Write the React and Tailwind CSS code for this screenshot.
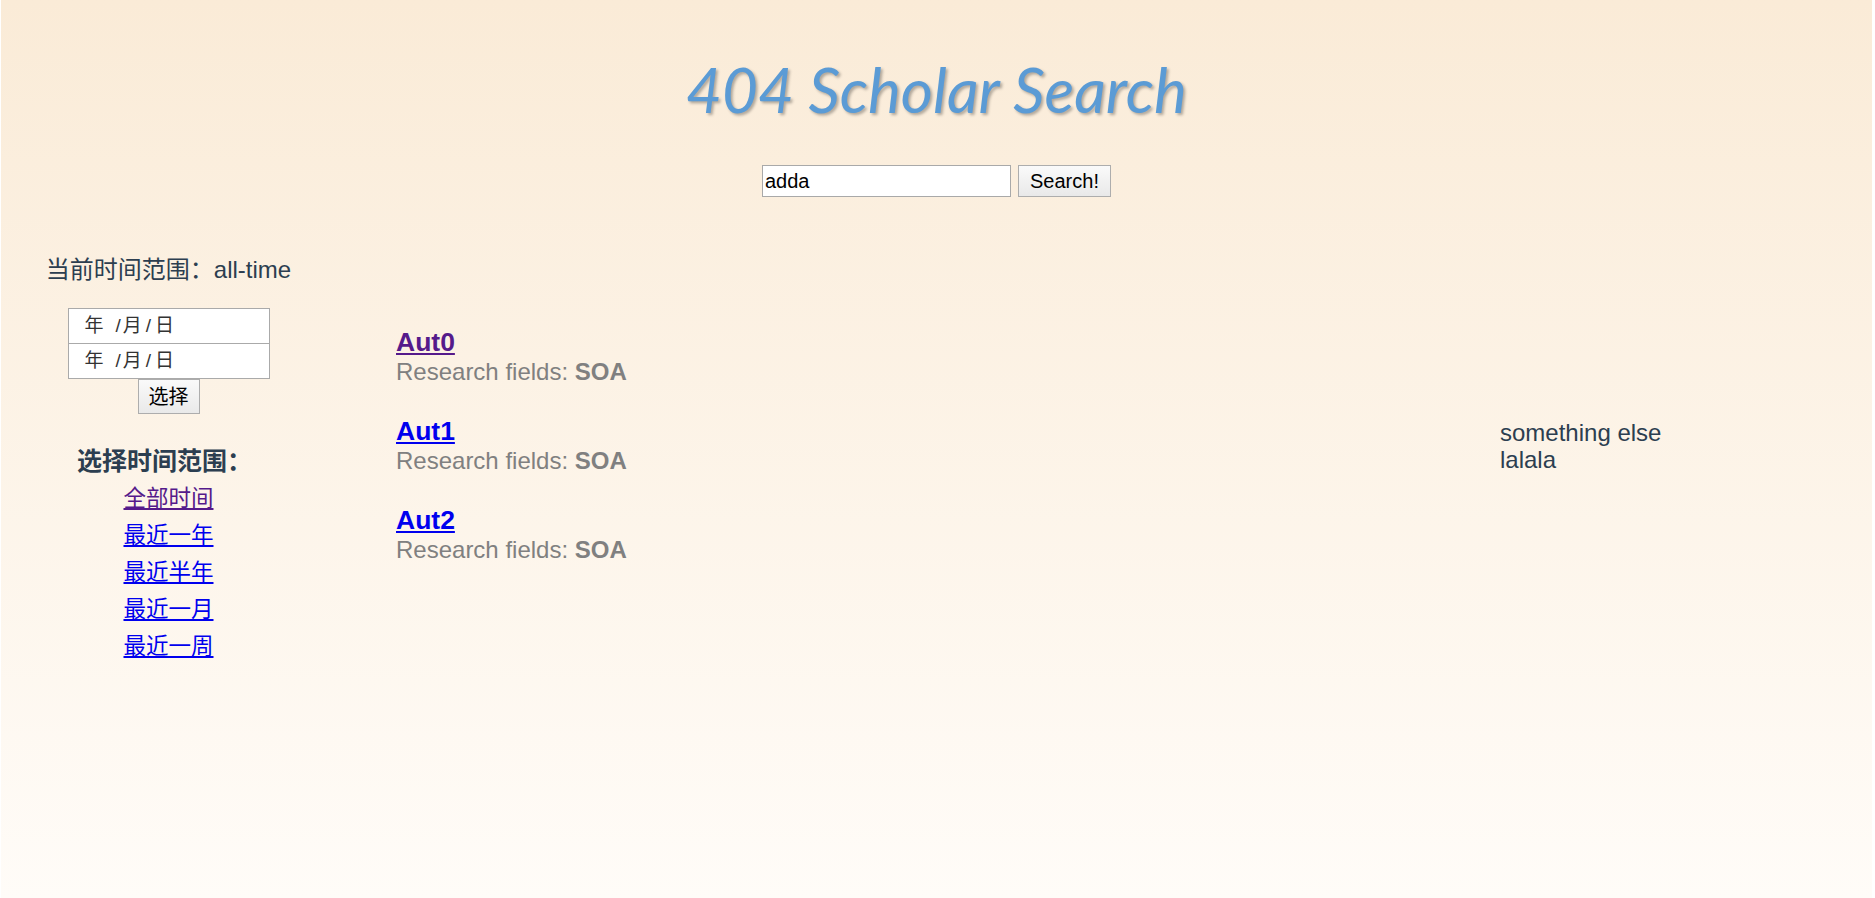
export default function App() {
  const sans = { fontFamily: '"Liberation Sans", Arial, "Noto Sans CJK SC", sans-serif' };
  const links = ["全部时间", "最近一年", "最近半年", "最近一月", "最近一周"];
  const authors = ["Aut0", "Aut1", "Aut2"];
  const DateBox = ({ top }) => (
    <div
      className={`w-[202px] border border-[#aaaaaa] bg-white pl-[16px] flex items-center text-[19px] text-[#333] ${top ? "h-[36px]" : "h-[35px] border-t-0"}`}
    >
      <span>年</span>
      <span className="ml-[12px]">/</span>
      <span className="ml-[2px]">月</span>
      <span className="ml-[4px]">/</span>
      <span className="ml-[4px]">日</span>
    </div>
  );
  return (
    <div className="bg-white min-h-[898px] w-full">
      <div
        className="ml-[1px] mr-[3px] min-h-[898px] bg-gradient-to-b from-[#faebd7] to-[#fffcf8] text-[#2c3e50]"
        style={sans}
      >
        <h1
          className="pt-[52px] text-center text-[62px] leading-[74px] italic font-normal text-[#5b9bd5] [text-shadow:2px_2px_3px_rgba(0,0,0,0.3)]"
          style={{ fontFamily: 'Lato, "Open Sans", sans-serif' }}
        >
          404 Scholar Search
        </h1>
        <div className="mt-[39px] flex justify-center gap-[7px]">
          <input
            defaultValue="adda"
            className="w-[249px] h-[32px] border border-[#a9a9a9] bg-white px-[2px] text-[20px] text-black outline-none"
            style={sans}
          />
          <button
            className="w-[93px] h-[32px] border border-[#adadad] bg-gradient-to-b from-[#fafafa] to-[#e9e9e9] text-[20px] text-black"
            style={sans}
          >
            Search!
          </button>
        </div>
        <div className="mt-[59px] flex">
          <div className="w-[335px] flex flex-col items-center text-center">
            <p className="text-[24px] leading-[28px]">当前时间范围：all-time</p>
            <div className="mt-[24px]">
              <DateBox top />
              <DateBox />
            </div>
            <button className="w-[62px] h-[35px] border border-[#adadad] bg-gradient-to-b from-[#fafafa] to-[#e9e9e9] text-[20px] text-black">
              选择
            </button>
            <p className="mt-[33px] text-[25px] leading-[28px] font-bold pr-[8px]">选择时间范围：</p>
            <div className="mt-[5px] flex flex-col items-center">
              {links.map((l, i) => (
                <a
                  key={l}
                  href="#"
                  className={`text-[22.5px] leading-[37px] underline ${i === 0 ? "text-[#551a8b]" : "text-[#0000ee]"}`}
                >
                  {l}
                </a>
              ))}
            </div>
          </div>
          <div className="flex-1 pl-[60px] pt-[71px] flex flex-col gap-[29px]">
            {authors.map((a, i) => (
              <div key={a}>
                <a
                  href="#"
                  className={`block w-fit text-[26.5px] leading-[30px] font-bold underline ${i === 0 ? "text-[#551a8b]" : "text-[#0000ee]"}`}
                >
                  {a}
                </a>
                <p className="text-[24px] leading-[30px] text-[#808080]">
                  Research fields: <b>SOA</b>
                </p>
              </div>
            ))}
          </div>
          <div className="w-[372px] pt-[163px] text-[24px] leading-[27px]">
            <p>something else</p>
            <p>lalala</p>
          </div>
        </div>
      </div>
    </div>
  );
}
